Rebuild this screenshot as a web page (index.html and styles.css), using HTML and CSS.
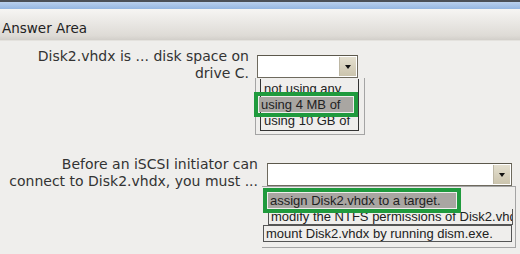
FILE: index.html
```html
<!DOCTYPE html>
<html lang="en">
  <head>
    <meta charset="UTF-8" />
    <title>Answer Area</title>
    <link rel="stylesheet" href="styles.css">
  </head>
  <body>
    <div class="topbar"></div>
    <div class="header">Answer Area</div>

    <div class="question q1">
      <div class="label">Disk2.vhdx is ... disk space on<br />drive C.</div>
      <div class="picker">
        <div class="select"><span class="arrow"></span></div>
        <div class="list">
          <div class="opts">
            <div class="opt">not using any</div>
            <div class="opt sel">using 4 MB of</div>
            <div class="opt">using 10 GB of</div>
          </div>
        </div>
      </div>
    </div>

    <div class="question q2">
      <div class="label">Before an iSCSI initiator can<br />connect to Disk2.vhdx, you must ...</div>
      <div class="picker">
        <div class="select"><span class="arrow"></span></div>
        <div class="list">
          <div class="opt sel">assign Disk2.vhdx to a target.</div>
          <div class="opt boxed">modify the NTFS permissions of Disk2.vhdx.</div>
          <div class="opt boxed">mount Disk2.vhdx by running dism.exe.</div>
        </div>
      </div>
    </div>
  </body>
</html>
```

FILE: styles.css
```css
body {
  margin: 0;
  width: 520px;
  height: 254px;
  overflow: hidden;
  background: #efeeec;
  font-family: "DejaVu Sans", Verdana, sans-serif;
  color: #333333;
}

.topbar {
  height: 7px;
  border-top: 2px solid #4a4f57;
  background: linear-gradient(#b9d0ee, #94b6e2);
}

.header {
  height: 25px;
  padding: 6px 0 0 2px;
  line-height: 27px;
  font-size: 13.5px;
  color: #222222;
  background: linear-gradient(#f6f5f3, #dedbd6 85%, #d2cfca);
  border-bottom: 1px solid #e4e2de;
}

.question {
  display: flex;
  align-items: flex-start;
}

.label {
  text-align: right;
  font-size: 14px;
  line-height: 17px;
  white-space: nowrap;
}

.q1 {
  padding-top: 7px;
  height: 108px;
}

.q1 .label {
  width: 249px;
  margin-right: 8px;
}

.q2 .label {
  width: 258px;
  margin-right: 9px;
}

.picker {
  font-family: "Liberation Sans", Arial, sans-serif;
  font-size: 13px;
  color: #222222;
  margin-top: 7px;
}

.select {
  box-sizing: border-box;
  height: 23px;
  border: 1px solid #6e6a5e;
  border-top-color: #5c584c;
  background: #ffffff;
  display: flex;
  justify-content: flex-end;
  padding: 1px;
}

.q1 .select {
  width: 101px;
}

.q2 .select {
  width: 245px;
}

.arrow {
  width: 16px;
  background: linear-gradient(#e4dfcf, #cbc4ad);
  border-left: 1px solid #bdb7a4;
  position: relative;
}

.arrow::after {
  content: "";
  position: absolute;
  left: 5px;
  top: 8px;
  border-left: 3px solid transparent;
  border-right: 3px solid transparent;
  border-top: 4px solid #111111;
}

.opt {
  height: 15px;
  line-height: 15px;
  padding-left: 2px;
  white-space: nowrap;
  overflow: hidden;
}

.sel {
  background: #a9a6a2;
  outline: 4px solid #1f9a3d;
  outline-offset: 1px;
}

.q1 .list {
  margin-left: -2px;
  width: 99px;
  border: 1px solid #a4a4a4;
  border-top: none;
  padding: 1px 5px 3px 4px;
}

.q1 .opts {
  border: 1px solid #333333;
  border-top: none;
  padding: 1px 0 1px 1px;
}

.q1 .opt {
  margin: 1px 0;
}

.q1 .sel {
  margin-left: -3px;
  width: 92px;
}

.q2 .list {
  margin-left: -5px;
  width: 253px;
  border: 1px solid #a4a4a4;
  border-left: none;
  padding: 6px 0 5px 0;
}

.q2 .sel {
  width: 186px;
  margin-left: 6px;
  padding-left: 2px;
}

.q2 .boxed {
  border: 1px solid #555555;
}

.q2 .boxed:nth-child(2) {
  margin-top: 1px;
  margin-left: 6px;
  margin-right: 2px;
  border-top: none;
}

.q2 .boxed:nth-child(3) {
  margin-left: 1px;
  margin-right: 3px;
}
```
